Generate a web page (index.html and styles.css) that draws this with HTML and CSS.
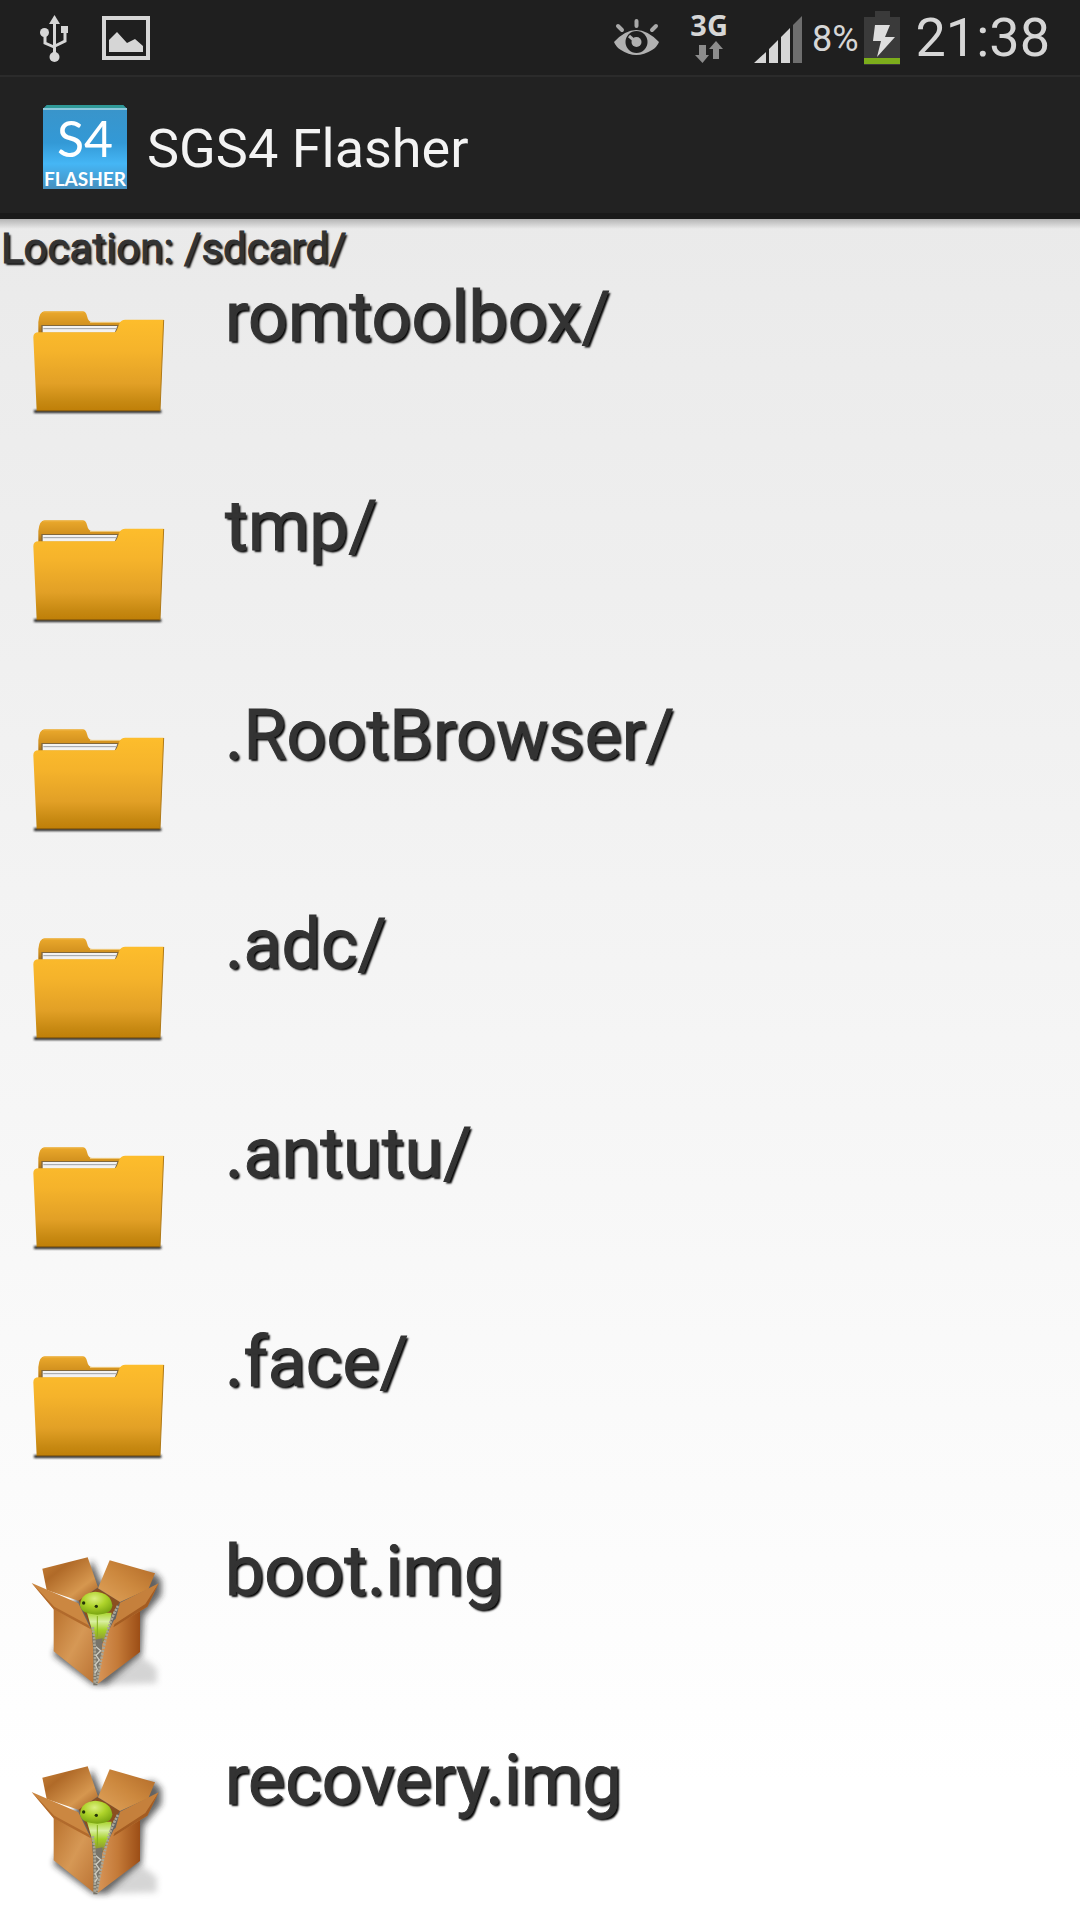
FILE: index.html
```html
<!DOCTYPE html>
<html lang="en">

<head>
    <meta charset="UTF-8">
    <meta name="viewport" content="width=device-width, initial-scale=1.0">
    <title>SGS4 Flasher</title>
    <link rel="stylesheet" href="styles.css">
</head>

<body>
    <!-- shared file icons -->
    <svg class="defs" aria-hidden="true">
        <defs>
            <linearGradient id="folderFront" x1="0" y1="0" x2="0" y2="1">
                <stop offset="0" stop-color="#fdbd2c" />
                <stop offset="0.35" stop-color="#f5b32b" />
                <stop offset="0.7" stop-color="#e2a026" />
                <stop offset="0.9" stop-color="#c78912" />
                <stop offset="1" stop-color="#bf7f08" />
            </linearGradient>
            <linearGradient id="folderBack" x1="0" y1="0" x2="0" y2="1">
                <stop offset="0" stop-color="#eba92c" />
                <stop offset="0.6" stop-color="#d3921f" />
                <stop offset="1" stop-color="#a86c10" />
            </linearGradient>
            <linearGradient id="flapLeft" x1="0" y1="0" x2="1" y2="1">
                <stop offset="0" stop-color="#c98238" />
                <stop offset="0.3" stop-color="#b06a28" />
                <stop offset="0.7" stop-color="#d6974f" />
                <stop offset="1" stop-color="#a05a20" />
            </linearGradient>
            <linearGradient id="flapRight" x1="1" y1="0" x2="0" y2="1">
                <stop offset="0" stop-color="#b06826" />
                <stop offset="0.5" stop-color="#cc883e" />
                <stop offset="1" stop-color="#dfa35c" />
            </linearGradient>
            <linearGradient id="boxLeft" x1="0" y1="0" x2="1" y2="1">
                <stop offset="0" stop-color="#b8702c" />
                <stop offset="0.5" stop-color="#d69855" />
                <stop offset="1" stop-color="#b87032" />
            </linearGradient>
            <linearGradient id="boxRight" x1="0" y1="0" x2="1" y2="0">
                <stop offset="0" stop-color="#d9975a" />
                <stop offset="0.5" stop-color="#c47a38" />
                <stop offset="1" stop-color="#9c4e16" />
            </linearGradient>
            <radialGradient id="droid" cx="0.45" cy="0.3" r="0.7">
                <stop offset="0" stop-color="#dcef80" />
                <stop offset="0.5" stop-color="#aed32a" />
                <stop offset="1" stop-color="#7aa512" />
            </radialGradient>
            <linearGradient id="droidBody" x1="0" y1="0" x2="0" y2="1">
                <stop offset="0" stop-color="#a9d42e" />
                <stop offset="0.3" stop-color="#d9efa0" />
                <stop offset="0.6" stop-color="#a4d026" />
                <stop offset="1" stop-color="#8a8a35" />
            </linearGradient>
            <filter id="soft" x="-20%" y="-20%" width="140%" height="140%">
                <feGaussianBlur stdDeviation="9" />
            </filter>
            <filter id="softLine" x="-5%" y="-200%" width="110%" height="500%">
                <feGaussianBlur stdDeviation="3" />
            </filter>
        </defs>

        <symbol id="folder" viewBox="0 0 432 432">
            <path d="M24 324H406V333H24Z" fill="#222" filter="url(#softLine)" />
            <path d="M37 94V60Q40 28 56 28H170Q180 28 183 42Q187 60 198 60H300V94Z" fill="url(#folderBack)" />
            <path d="M52 30H172" stroke="#f0bd55" stroke-width="2" />
            <path d="M192 61H283" stroke="#f2d08a" stroke-width="3" />
            <path d="M46 69H278V92H46Z" fill="#80673c" />
            <path d="M50 72H274L266 92H50Z" fill="#f2f2f2" />
            <path d="M52 80H272" stroke="#9da1a5" stroke-width="3" />
            <path d="M22 106Q22 91 38 91H264Q270 91 273 83L280 65Q285 53 298 53H413L402 326H32Z" fill="url(#folderFront)" />
            <path d="M32 326H402" stroke="#94620a" stroke-width="4" />
            <path d="M413 54L402 326" stroke="#b07a18" stroke-width="3" />
        </symbol>

        <symbol id="package" viewBox="48 48 432 432">
            <path d="M245 60L275 130L430 96L454 120V165L400 230L394 345L290 434H250L130 345Z" fill="#222" opacity="0.7" filter="url(#soft)" />
            <path d="M280 434L395 350L440 385V430Z" fill="#777" opacity="0.3" filter="url(#soft)" />
            <path d="M205 180L262 145L330 185L260 300Z" fill="#8a4f20" />
            <path d="M97 86L233 52L264 142L205 182L110 150Z" fill="url(#flapLeft)" />
            <path d="M299 61L435 100L415 148L330 186L264 145Z" fill="url(#flapRight)" />
            <path d="M131 200L245 268L258 436L131 334Z" fill="url(#boxLeft)" />
            <path d="M312 240L390 205V336L258 436L272 320Z" fill="url(#boxRight)" />
            <!-- android in the box -->
            <path d="M231 218H305L298 262L278 306H256L240 250Z" fill="url(#droidBody)" />
            <path d="M262 228V290" stroke="#86b01c" stroke-width="3" />
            <path d="M210 196Q212 158 256 155Q302 158 307 196Q306 222 262 224Q212 222 210 196Z" fill="url(#droid)" />
            <circle cx="221" cy="189" r="5" fill="#26340a" />
            <circle cx="259" cy="199" r="5" fill="#26340a" />
            <path d="M65 129L205 190L243 268L131 208Z" fill="#cb8741" />
            <path d="M65 129L131 208L243 268L236 256L133 200Z" fill="#b16a2c" />
            <path d="M446 130L330 188L310 262L412 200Z" fill="#c5803c" />
            <path d="M446 130L412 200L310 262L314 252L406 192Z" fill="#a45c22" />
            <!-- zip -->
            <path d="M250 300L278 295L274 350L262 436H250Z" fill="#77746a" />
            <path d="M248 262Q258 320 254 432M324 198Q300 240 286 300Q274 350 260 432" fill="none" stroke="#aaa696" stroke-width="8" stroke-dasharray="7 3" />
            <path d="M258 320L272 332L258 346L268 360L256 374L262 388L254 400" fill="none" stroke="#cfcdc2" stroke-width="4" />
        </symbol>
    </svg>

    <header class="status-bar">
        <svg class="status-icon" width="30" height="50" viewBox="39 12 30 50" role="img" aria-label="USB connected">
            <path d="M54.500 22V56M45 32V42L54 46M65 28V40L55 45" fill="none" stroke="#d6d6d6" stroke-width="3" />
            <path d="M54.500 14L60 23H49Z" fill="#d6d6d6" />
            <circle cx="44.500" cy="31.500" r="4.500" fill="#d6d6d6" />
            <circle cx="54.500" cy="56" r="5" fill="#d6d6d6" />
            <path d="M61 25H68V32H61Z" fill="#d6d6d6" />
        </svg>
        <svg class="status-icon picture-icon" width="48" height="44" viewBox="0 0 48 44" role="img" aria-label="Screenshot saved">
            <path d="M2 2H46V42H2Z" fill="none" stroke="#d6d6d6" stroke-width="4" />
            <path d="M7 24L15 16L25 27L33 23L41 30V36H7Z" fill="#d6d6d6" />
        </svg>

        <svg class="status-icon eye-icon" width="46" height="38" viewBox="0 0 46 38" role="img" aria-label="Smart stay">
            <path d="M22.500 2V7M4 7L8 11M42 7L38 11" stroke="#a9a9a9" stroke-width="4" stroke-linecap="round" />
            <path d="M0 23Q22 -1 45 23Q43 28 38 31Q22 41 7 31Q2 28 0 23Z" fill="#b1b1b1" />
            <circle cx="22.500" cy="23" r="11" fill="#1f1f1f" />
            <circle cx="22.500" cy="23" r="5" fill="#b1b1b1" />
            <path d="M15 17L22 23" stroke="#b1b1b1" stroke-width="3" />
        </svg>
        <div class="network">
            <span>3G</span>
            <svg width="28" height="22" viewBox="0 0 28 22" aria-hidden="true">
                <path d="M4 4H11V14H14L7.500 22L0 14H4ZM18 18V8H14L21 0L28 8H24V18Z" fill="#8c8c8c" />
            </svg>
        </div>
        <svg class="status-icon signal-icon" width="48" height="48" viewBox="0 0 48 48" role="img" aria-label="Signal strength">
            <path d="M0 47L12 36V47ZM15 33L24 24V47H15ZM27 21L36 12V47H27Z" fill="#d6d6d6" />
            <path d="M39 9L48 0V47H39Z" fill="#6e6e6e" />
        </svg>
        <span class="battery-level">8%</span>
        <svg class="status-icon" width="36" height="54" viewBox="0 0 36 54" role="img" aria-label="Charging">
            <path d="M11 0H26V6H36V54H0V6H11Z" fill="#3a3a3a" />
            <path d="M0 47H36V53H0Z" fill="#7cad1b" />
            <path d="M11 14H26L21 26H31L13 46L17 30H9Z" fill="#dedede" />
        </svg>
        <time class="clock">21:38</time>
    </header>

    <div class="action-bar">
        <svg class="app-icon" width="84" height="84" viewBox="0 0 84 84" aria-hidden="true">
            <defs>
                <linearGradient id="appBg" x1="0" y1="0" x2="0" y2="1">
                    <stop offset="0" stop-color="#3a94c9" />
                    <stop offset="0.45" stop-color="#3399d6" />
                    <stop offset="0.7" stop-color="#45b6f5" />
                    <stop offset="1" stop-color="#458fbe" />
                </linearGradient>
            </defs>
            <path d="M0 4L4 0H80L84 4V84H0Z" fill="url(#appBg)" />
            <path d="M4 0H80L83 3H1Z" fill="#2f9a98" />
            <path d="M0 3H84V5H0Z" fill="#8cc8dd" />
            <text x="42" y="52" class="app-icon-name">S4</text>
            <text x="42" y="81" class="app-icon-label">FLASHER</text>
        </svg>
        <h1>SGS4 Flasher</h1>
    </div>

    <main>
        <p class="location">Location: /sdcard/</p>
        <ul class="file-list">
            <li><a href="#"><svg aria-hidden="true"><use href="#folder" /></svg><span>romtoolbox/</span></a></li>
            <li><a href="#"><svg aria-hidden="true"><use href="#folder" /></svg><span>tmp/</span></a></li>
            <li><a href="#"><svg aria-hidden="true"><use href="#folder" /></svg><span>.RootBrowser/</span></a></li>
            <li><a href="#"><svg aria-hidden="true"><use href="#folder" /></svg><span>.adc/</span></a></li>
            <li><a href="#"><svg aria-hidden="true"><use href="#folder" /></svg><span>.antutu/</span></a></li>
            <li><a href="#"><svg aria-hidden="true"><use href="#folder" /></svg><span>.face/</span></a></li>
            <li><a href="#"><svg aria-hidden="true"><use href="#package" /></svg><span>boot.img</span></a></li>
            <li><a href="#"><svg aria-hidden="true"><use href="#package" /></svg><span>recovery.img</span></a></li>
        </ul>
    </main>
</body>

</html>
```
FILE: styles.css
```css
* {
    box-sizing: border-box;
}

body {
    margin: 0;
    height: 100vh;
    display: flex;
    flex-direction: column;
    overflow: hidden;
    background-color: #fff;
    color: #333;
    font-family: Roboto, sans-serif;
}

.defs {
    position: absolute;
    width: 0;
    height: 0;
}

/* status bar */
.status-bar {
    display: flex;
    align-items: center;
    flex-shrink: 0;
    height: 77px;
    padding: 0 30px 0 39px;
    background-color: #1f1f1f;
    border-bottom: 2px solid #2b2b2b;
    color: #d6d6d6;
}

.status-icon {
    flex-shrink: 0;
}

.picture-icon {
    margin-left: 33px;
}

.eye-icon {
    margin-left: auto;
}

.network {
    display: flex;
    flex-direction: column;
    align-items: center;
    gap: 2px;
    margin-left: 30px;
    padding-bottom: 2px;
    font: bold 29px/28px "Open Sans", sans-serif;
}

.signal-icon {
    margin: 4px 10px 0 26px;
}

.battery-level {
    margin-right: 5px;
    padding-top: 3px;
    font-size: 36px;
}

.clock {
    margin-left: 16px;
    font-size: 54px;
}

/* title */
.action-bar {
    display: flex;
    align-items: center;
    flex-shrink: 0;
    gap: 20px;
    height: 142px;
    padding: 4px 43px 0;
    background-color: #222;
    border-bottom: 6px solid #1a1a1a;
    color: #f3f3f3;
}

h1 {
    margin: 0;
    padding-top: 3px;
    font-size: 54px;
    font-weight: 400;
}

.app-icon-name,
.app-icon-label {
    fill: #fff;
    font-family: Lato, sans-serif;
    text-anchor: middle;
}

.app-icon-name {
    font-size: 50px;
}

.app-icon-label {
    font-size: 19px;
    font-weight: 700;
}

/* file list */
main {
    flex: 1;
    min-height: 0;
    background: linear-gradient(#b4b4b4, rgba(187, 187, 187, 0) 10px), linear-gradient(#eaeaea, #fff 92%);
}

.location,
.file-list span {
    -webkit-text-stroke: 1px #333;
    text-shadow: 2px 2px 2px #000;
}

.location {
    margin: 0;
    padding: 5px 0 2px 1px;
    font-size: 42px;
    line-height: 50px;
}

.file-list {
    margin: 0;
    padding: 0;
    list-style: none;
}

.file-list a {
    display: flex;
    align-items: flex-start;
    height: 209px;
    padding: 0 26px;
    color: inherit;
    text-decoration: none;
}

.file-list svg {
    flex-shrink: 0;
    width: 144px;
    height: 144px;
    margin-top: 26px;
}

.file-list span {
    margin-left: 55px;
    font-size: 70px;
    line-height: 82px;
}
```
